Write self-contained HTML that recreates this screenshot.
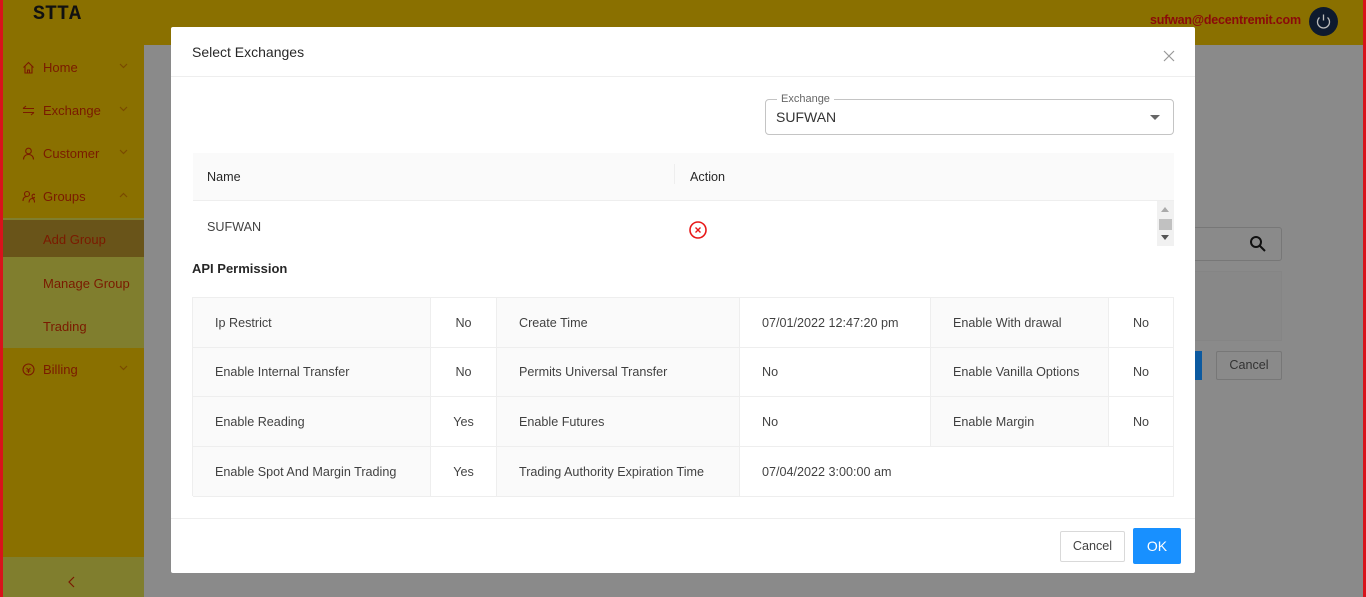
<!DOCTYPE html>
<html><head><meta charset="utf-8"><style>
*{box-sizing:border-box;margin:0;padding:0}
body{width:1366px;height:597px;overflow:hidden;position:relative;background:#8a8a8a;font-family:"Liberation Sans",sans-serif;font-size:12.6px;color:rgba(0,0,0,.75)}
.abs{position:absolute}
.hdr{left:0;top:0;width:1366px;height:45px;background:#8a7000}
.side{left:0;top:45px;width:144px;height:552px;background:#8a7000}
.redl{left:0;top:0;width:3px;height:597px;background:#d8131b}
.redr{left:1363px;top:0;width:3px;height:597px;background:#d8131b}
.logo{left:33px;top:3px;font:bold 20px "Liberation Mono",monospace;color:#111}
.mi{left:3px;width:141px;height:43px;color:#7a1a00;font-size:13px}
.mi span.t{position:absolute;left:40px;top:14px}
.mi .ic{position:absolute;left:19px;top:15px;width:13px;height:13px}
.mi .ch{position:absolute;left:116px;top:17px;width:9px;height:6px}
.sub{left:3px;top:218px;width:141px;height:130px;background:#807e2e}
.sel{left:3px;top:220px;width:141px;height:37px;background:#695419}
.modal{left:171px;top:27px;width:1024px;height:546px;background:#fff;border-radius:2px}
.cell{position:absolute;border-right:1px solid #eee;border-bottom:1px solid #eee;padding-left:22px;display:flex;align-items:center;font-size:12.6px;color:rgba(0,0,0,.75)}
.lb{background:#fafafa}
.v{padding-left:0;justify-content:center}
</style></head><body>
<div class="abs hdr"></div>
<div class="abs side"></div>
<div class="abs logo">STTA</div>
<div class="abs" style="left:1150px;top:13px;font-weight:bold;font-size:12.5px;color:#8b0a0a;letter-spacing:-0.2px">sufwan@decentremit.com</div>
<div class="abs" style="left:1309px;top:7px;width:29px;height:29px;border-radius:50%;background:#0e1a2e">
<svg width="29" height="29" viewBox="0 0 29 29"><path d="M10.5 10.5a6 6 0 1 0 8 0" fill="none" stroke="#bbb" stroke-width="1.3"/><path d="M14.5 7.5v6" stroke="#bbb" stroke-width="1.3"/></svg></div>
<div class="abs sub"></div>
<div class="abs sel"></div>
<div class="abs mi" style="top:46px"><svg class="ic" viewBox="0 0 13 13"><path d="M1.5 6.5L6.5 1.5L11.5 6.5M3 5v7h7V5M5.5 12V9h2v3" fill="none" stroke="#7a1a00" stroke-width="1.1"/></svg><span class="t">Home</span><svg class="ch" viewBox="0 0 9 6"><path d="M1 1l3.5 3.5L8 1" fill="none" stroke="#7a4a00" stroke-width="1.2"/></svg></div>
<div class="abs mi" style="top:89px"><svg class="ic" viewBox="0 0 13 13"><path d="M1 4.5h11M1 8.5h11M4 2L1 4.5M9 11l3-2.5" fill="none" stroke="#7a1a00" stroke-width="1.1"/></svg><span class="t">Exchange</span><svg class="ch" viewBox="0 0 9 6"><path d="M1 1l3.5 3.5L8 1" fill="none" stroke="#7a4a00" stroke-width="1.2"/></svg></div>
<div class="abs mi" style="top:132px"><svg class="ic" viewBox="0 0 13 13"><circle cx="6.5" cy="4" r="2.8" fill="none" stroke="#7a1a00" stroke-width="1.1"/><path d="M1.5 12.5c0-3 2-5 5-5s5 2 5 5" fill="none" stroke="#7a1a00" stroke-width="1.1"/></svg><span class="t">Customer</span><svg class="ch" viewBox="0 0 9 6"><path d="M1 1l3.5 3.5L8 1" fill="none" stroke="#7a4a00" stroke-width="1.2"/></svg></div>
<div class="abs mi" style="top:175px"><svg class="ic" viewBox="0 0 13 13"><circle cx="5" cy="4" r="2.5" fill="none" stroke="#7a1a00" stroke-width="1.1"/><path d="M1 11c0-3 1.5-4.5 4-4.5M7 12.5c0-2.5 1.5-4 3-4s2.5 1.5 2.5 4M10 6a1.8 1.8 0 1 1 0 .1" fill="none" stroke="#7a1a00" stroke-width="1.1"/></svg><span class="t">Groups</span><svg class="ch" viewBox="0 0 9 6"><path d="M1 5l3.5-3.5L8 5" fill="none" stroke="#7a4a00" stroke-width="1.2"/></svg></div>
<div class="abs mi" style="top:218px"><span class="t" style="top:14px">Add Group</span></div>
<div class="abs mi" style="top:262px"><span class="t">Manage Group</span></div>
<div class="abs mi" style="top:305px"><span class="t">Trading</span></div>
<div class="abs mi" style="top:348px"><svg class="ic" viewBox="0 0 13 13"><circle cx="6.5" cy="6.5" r="5.5" fill="none" stroke="#7a1a00" stroke-width="1.1"/><path d="M4.5 5l2 2 2-2M6.5 7v3M4.5 8h4" fill="none" stroke="#7a1a00" stroke-width="1"/></svg><span class="t">Billing</span><svg class="ch" viewBox="0 0 9 6"><path d="M1 1l3.5 3.5L8 1" fill="none" stroke="#7a4a00" stroke-width="1.2"/></svg></div>
<div class="abs" style="left:3px;top:557px;width:141px;height:40px;background:#807e2e"></div>
<svg class="abs" style="left:67px;top:576px" width="8" height="12" viewBox="0 0 8 12"><path d="M7 1L2 6l5 5" fill="none" stroke="#7a1a00" stroke-width="1.2"/></svg>
<div class="abs" style="left:1183px;top:227px;width:99px;height:34px;border:1px solid #777;border-radius:3px"></div>
<svg class="abs" style="left:1249px;top:235px" width="18" height="18" viewBox="0 0 18 18"><circle cx="7" cy="7" r="5" fill="none" stroke="#111" stroke-width="2"/><path d="M11 11l5 5" stroke="#111" stroke-width="2"/></svg>
<div class="abs" style="left:1183px;top:271px;width:99px;height:70px;border:1px solid #858585;background:#888"></div>
<div class="abs" style="left:1183px;top:351px;width:19px;height:29px;background:#0c5aa0"></div>
<div class="abs" style="left:1216px;top:351px;width:66px;height:29px;border:1px solid #777;border-radius:2px;color:#333;text-align:center;line-height:27px">Cancel</div>
<div class="abs redl"></div><div class="abs redr"></div>

<div class="abs modal">
 <div class="abs" style="left:21px;top:17px;font-size:14px;color:rgba(0,0,0,.85)">Select Exchanges</div>
 <svg class="abs" style="left:992px;top:23px" width="12" height="12" viewBox="0 0 12 12"><path d="M1 1l10 10M11 1L1 11" stroke="#999" stroke-width="1.2"/></svg>
 <div class="abs" style="left:0;top:49px;width:1024px;height:1px;background:#eee"></div>
 <div class="abs" style="left:594px;top:72px;width:409px;height:36px;border:1px solid #c4c4c4;border-radius:4px"></div>
 <div class="abs" style="left:606px;top:66px;background:#fff;padding:0 4px;font-size:11px;color:#666">Exchange</div>
 <div class="abs" style="left:605px;top:82px;font-size:14px;color:#333">SUFWAN</div>
 <div class="abs" style="left:979px;top:88px;width:0;height:0;border-left:5px solid transparent;border-right:5px solid transparent;border-top:5px solid #666"></div>
 <div class="abs" style="left:22px;top:126px;width:981px;height:48px;background:#fafafa;border-bottom:1px solid #eee"></div>
 <div class="abs" style="left:36px;top:143px;color:rgba(0,0,0,.85)">Name</div>
 <div class="abs" style="left:503px;top:137px;width:1px;height:20px;background:#eee"></div>
 <div class="abs" style="left:519px;top:143px;color:rgba(0,0,0,.85)">Action</div>
 <div class="abs" style="left:36px;top:193px">SUFWAN</div>
 <svg class="abs" style="left:517px;top:193px" width="20" height="20" viewBox="0 0 20 20"><circle cx="10" cy="10" r="8" fill="none" stroke="#e81818" stroke-width="1.6"/><path d="M7.5 7.5l5 5M12.5 7.5l-5 5" stroke="#e81818" stroke-width="1.4"/></svg>
 <div class="abs" style="left:986px;top:174px;width:17px;height:45px;background:#f1f1f1"></div>
 <div class="abs" style="left:990px;top:180px;border-left:4px solid transparent;border-right:4px solid transparent;border-bottom:5px solid #aaa"></div>
 <div class="abs" style="left:988px;top:192px;width:13px;height:11px;background:#c1c1c1"></div>
 <div class="abs" style="left:990px;top:208px;border-left:4px solid transparent;border-right:4px solid transparent;border-top:5px solid #555"></div>
 <div class="abs" style="left:21px;top:234px;font-weight:bold;font-size:13px;color:rgba(0,0,0,.85)">API Permission</div>
 <div class="abs" style="left:21px;top:270px;width:982px;height:199px;border-top:1px solid #eee;border-left:1px solid #eee">
  <div class="cell lb" style="left:0;top:0;width:238px;height:50px">Ip Restrict</div>
  <div class="cell v" style="left:238px;top:0;width:66px;height:50px">No</div>
  <div class="cell lb" style="left:304px;top:0;width:243px;height:50px">Create Time</div>
  <div class="cell" style="left:547px;top:0;width:191px;height:50px">07/01/2022 12:47:20 pm</div>
  <div class="cell lb" style="left:738px;top:0;width:178px;height:50px">Enable With drawal</div>
  <div class="cell v" style="left:916px;top:0;width:65px;height:50px">No</div>
  <div class="cell lb" style="left:0;top:50px;width:238px;height:49px">Enable Internal Transfer</div>
  <div class="cell v" style="left:238px;top:50px;width:66px;height:49px">No</div>
  <div class="cell lb" style="left:304px;top:50px;width:243px;height:49px">Permits Universal Transfer</div>
  <div class="cell" style="left:547px;top:50px;width:191px;height:49px">No</div>
  <div class="cell lb" style="left:738px;top:50px;width:178px;height:49px">Enable Vanilla Options</div>
  <div class="cell v" style="left:916px;top:50px;width:65px;height:49px">No</div>
  <div class="cell lb" style="left:0;top:99px;width:238px;height:50px">Enable Reading</div>
  <div class="cell v" style="left:238px;top:99px;width:66px;height:50px">Yes</div>
  <div class="cell lb" style="left:304px;top:99px;width:243px;height:50px">Enable Futures</div>
  <div class="cell" style="left:547px;top:99px;width:191px;height:50px">No</div>
  <div class="cell lb" style="left:738px;top:99px;width:178px;height:50px">Enable Margin</div>
  <div class="cell v" style="left:916px;top:99px;width:65px;height:50px">No</div>
  <div class="cell lb" style="left:0;top:149px;width:238px;height:50px">Enable Spot And Margin Trading</div>
  <div class="cell v" style="left:238px;top:149px;width:66px;height:50px">Yes</div>
  <div class="cell lb" style="left:304px;top:149px;width:243px;height:50px">Trading Authority Expiration Time</div>
  <div class="cell" style="left:547px;top:149px;width:434px;height:50px">07/04/2022 3:00:00 am</div>
 </div>
 <div class="abs" style="left:0;top:491px;width:1024px;height:1px;background:#eee"></div>
 <div class="abs" style="left:889px;top:504px;width:65px;height:31px;border:1px solid #d9d9d9;border-radius:2px;text-align:center;line-height:29px;color:rgba(0,0,0,.75)">Cancel</div>
 <div class="abs" style="left:962px;top:501px;width:48px;height:36px;background:#1890ff;border-radius:2px;text-align:center;line-height:36px;color:#fff;font-size:14px">OK</div>
</div>
</body></html>
